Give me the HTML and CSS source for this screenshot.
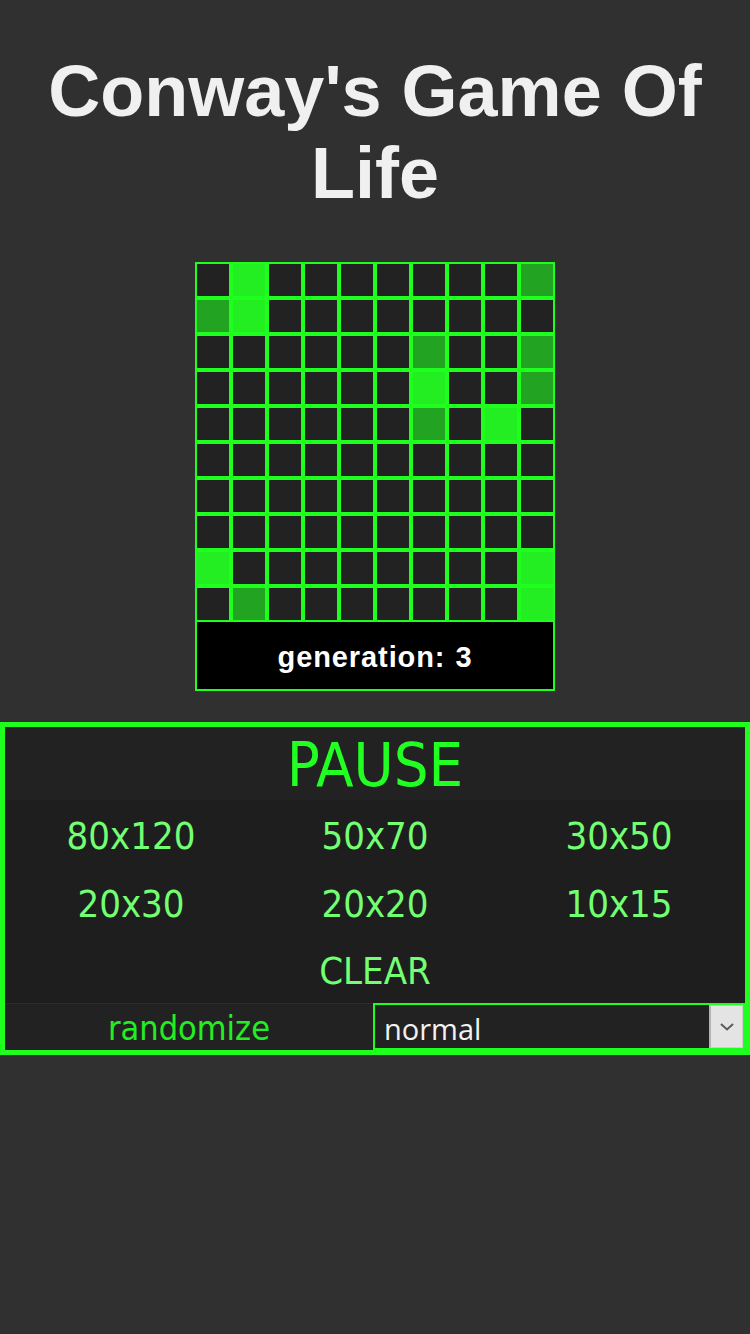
FILE: index.html
```html
<!DOCTYPE html>
<html lang="en">
<head>
<meta charset="utf-8">
<title>Conway's Game Of Life</title>
<link rel="stylesheet" href="styles.css">
</head>
<body>
<h1 class="title">Conway's Game Of Life</h1>
<div class="board">
  <div class="grid">
    <div class="cell"></div><div class="cell live"></div><div class="cell"></div><div class="cell"></div><div class="cell"></div><div class="cell"></div><div class="cell"></div><div class="cell"></div><div class="cell"></div><div class="cell old"></div>
    <div class="cell old"></div><div class="cell live"></div><div class="cell"></div><div class="cell"></div><div class="cell"></div><div class="cell"></div><div class="cell"></div><div class="cell"></div><div class="cell"></div><div class="cell"></div>
    <div class="cell"></div><div class="cell"></div><div class="cell"></div><div class="cell"></div><div class="cell"></div><div class="cell"></div><div class="cell old"></div><div class="cell"></div><div class="cell"></div><div class="cell old"></div>
    <div class="cell"></div><div class="cell"></div><div class="cell"></div><div class="cell"></div><div class="cell"></div><div class="cell"></div><div class="cell live"></div><div class="cell"></div><div class="cell"></div><div class="cell old"></div>
    <div class="cell"></div><div class="cell"></div><div class="cell"></div><div class="cell"></div><div class="cell"></div><div class="cell"></div><div class="cell old"></div><div class="cell"></div><div class="cell live"></div><div class="cell"></div>
    <div class="cell"></div><div class="cell"></div><div class="cell"></div><div class="cell"></div><div class="cell"></div><div class="cell"></div><div class="cell"></div><div class="cell"></div><div class="cell"></div><div class="cell"></div>
    <div class="cell"></div><div class="cell"></div><div class="cell"></div><div class="cell"></div><div class="cell"></div><div class="cell"></div><div class="cell"></div><div class="cell"></div><div class="cell"></div><div class="cell"></div>
    <div class="cell"></div><div class="cell"></div><div class="cell"></div><div class="cell"></div><div class="cell"></div><div class="cell"></div><div class="cell"></div><div class="cell"></div><div class="cell"></div><div class="cell"></div>
    <div class="cell live"></div><div class="cell"></div><div class="cell"></div><div class="cell"></div><div class="cell"></div><div class="cell"></div><div class="cell"></div><div class="cell"></div><div class="cell"></div><div class="cell live"></div>
    <div class="cell"></div><div class="cell old"></div><div class="cell"></div><div class="cell"></div><div class="cell"></div><div class="cell"></div><div class="cell"></div><div class="cell"></div><div class="cell"></div><div class="cell live"></div>
  </div>
  <div class="generation">generation: <span class="gen-num">3</span></div>
</div>

<div class="panel">
  <button class="pause">PAUSE</button>
  <div class="sizes">
    <button class="size">80x120</button>
    <button class="size">50x70</button>
    <button class="size">30x50</button>
    <button class="size">20x30</button>
    <button class="size">20x20</button>
    <button class="size">10x15</button>
    <button class="size clear">CLEAR</button>
  </div>
  <div class="bottom-row">
    <button class="randomize">randomize</button>
    <div class="select-wrap">
      <select class="speed">
        <option>normal</option>
        <option>slow</option>
        <option>fast</option>
      </select>
      <span class="select-arrow">
        <svg width="14" height="8" viewBox="0 0 14 8"><path d="M1 1 L7 6.5 L13 1" fill="none" stroke="#5a5a5a" stroke-width="2"/></svg>
      </span>
    </div>
  </div>
</div>
</body>
</html>
```

FILE: styles.css
```css
html, body {
  margin: 0;
  padding: 0;
  background: #303030;
}

body {
  font-family: "Liberation Sans", Arial, sans-serif;
  min-height: 1334px;
}

.title {
  margin: 50px 0 48px;
  font-size: 72px;
  font-weight: bold;
  line-height: normal;
  text-align: center;
  color: #f0f0f0;
}

.board {
  width: 360px;
  margin: 0 auto;
}

.grid {
  display: grid;
  grid-template-columns: repeat(10, 36px);
  grid-auto-rows: 36px;
}

.cell {
  box-sizing: border-box;
  border: 2px solid #1eff1e;
  background: #222222;
}

.cell.live {
  background: #22ee22;
}

.cell.old {
  background: #22a422;
}

.generation {
  box-sizing: border-box;
  height: 69px;
  border: 2px solid #1eff1e;
  border-top: 0;
  background: #000;
  color: #fff;
  font-weight: bold;
  font-size: 29px;
  letter-spacing: 0.9px;
  display: flex;
  align-items: center;
  justify-content: center;
  padding-top: 3px;
}

.gen-num {
  margin-left: 10px;
}

.panel {
  margin-top: 31px;
  border: 5px solid #1eff1e;
  background: #1e1e1e;
  display: flex;
  flex-direction: column;
  font-family: "DejaVu Sans Condensed", "DejaVu Sans", sans-serif;
  font-stretch: condensed;
}

.panel button {
  font-family: inherit;
  font-stretch: condensed;
  border: 0;
  margin: 0;
  padding: 0;
  cursor: pointer;
}

.pause {
  height: 73px;
  background: #222222;
  color: #22ff22;
  font-size: 61px;
  line-height: normal;
  padding-top: 2px !important;
}

.sizes {
  display: grid;
  grid-template-columns: repeat(3, 1fr);
  grid-template-rows: 68px 68px 67px;
  padding: 0 4px;
}

.size {
  background: transparent;
  color: #72ff72;
  font-size: 38px;
  padding-top: 4px !important;
}

.size.clear {
  grid-column: 1 / 4;
  padding-top: 2px !important;
}

.bottom-row {
  display: flex;
  height: 47px;
}

.randomize {
  flex: 1 1 0;
  background: #222222;
  border-top: 1px solid #2c2c2c !important;
  color: #22ee22;
  font-size: 34px;
  line-height: 44px;
  padding-top: 1px !important;
}

.select-wrap {
  flex: 1 1 0;
  box-sizing: border-box;
  border: 2px solid #1eff1e;
  background: #222222;
  display: flex;
  align-items: stretch;
}

.speed {
  flex: 1 1 auto;
  min-width: 0;
  -webkit-appearance: none;
  appearance: none;
  border: 0;
  outline: none;
  background: transparent;
  color: #f2f2f2;
  font-family: "Open Sans", "Liberation Sans", sans-serif;
  font-size: 29px;
  padding: 3px 0 0 9px;
  margin: 0;
}

.select-arrow {
  width: 34px;
  box-sizing: border-box;
  background: #e4e4e4;
  border: 1px solid #cfcfcf;
  border-left: 2px solid #b5b5b5;
  display: flex;
  align-items: center;
  justify-content: center;
}
```
